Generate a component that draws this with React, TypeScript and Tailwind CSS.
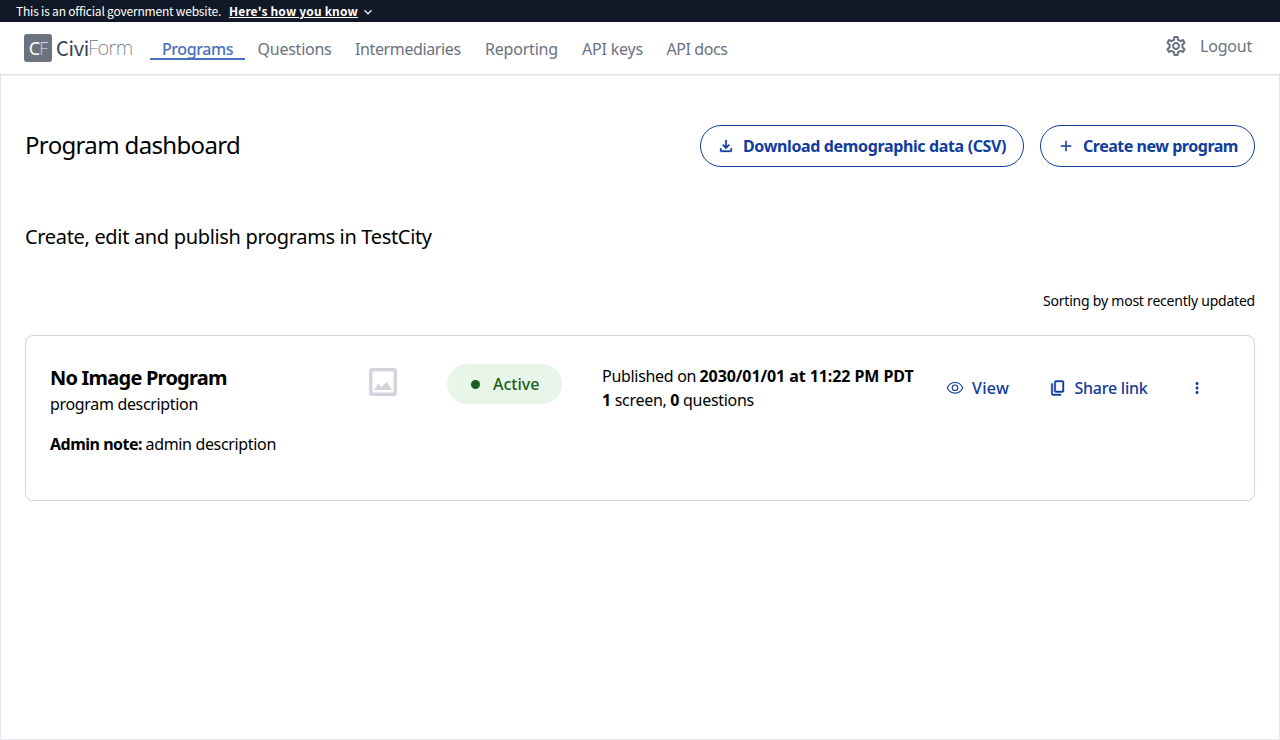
import type { ReactNode } from "react";
import { MdAdd, MdExpandMore, MdMoreVert, MdOutlineSettings } from "react-icons/md";

function DownloadIcon() {
  return (
    <svg viewBox="0 -960 960 960" className="size-[18px] shrink-0" fill="currentColor" stroke="currentColor" strokeWidth="16">
      <path d="M480-320 280-520l56-58 104 104v-326h80v326l104-104 56 58-200 200ZM240-160q-33 0-56.5-23.5T160-240v-120h80v120h480v-120h80v120q0 33-23.5 56.5T720-160H240Z" />
    </svg>
  );
}

function CopyIcon() {
  return (
    <svg viewBox="0 -960 960 960" className="size-[18px] shrink-0" fill="currentColor" stroke="currentColor" strokeWidth="22">
      <path d="M360-240q-33 0-56.5-23.5T280-320v-480q0-33 23.5-56.5T360-880h360q33 0 56.5 23.5T800-800v480q0 33-23.5 56.5T720-240H360Zm0-80h360v-480H360v480ZM200-80q-33 0-56.5-23.5T120-160v-560h80v560h440v80H200Z" />
    </svg>
  );
}

function EyeIcon() {
  return (
    <svg viewBox="0 0 24 24" className="size-[18px] shrink-0" fill="none" stroke="currentColor" strokeWidth="1.5">
      <path d="M1.7 11.7C3.6 7.3 7.5 4.6 12 4.6s8.4 2.7 10.3 7.1c-1.9 4.4-5.8 7.1-10.3 7.1s-8.4-2.7-10.3-7.1Z" />
      <circle cx="12" cy="11.7" r="3.7" />
    </svg>
  );
}

function ImageIcon() {
  return (
    <svg viewBox="0 0 28 28" className="size-7" fill="none">
      <rect x="1.75" y="1.75" width="24.5" height="24.5" rx="1.5" stroke="#d1d5db" strokeWidth="3.4" />
      <path d="M5 22 9.4 15.6 12.6 19.4 17.6 13.8 23.2 22Z" fill="#d1d5db" />
    </svg>
  );
}

const navItems = [
  { label: "Questions", style: "w-[97.5px] tracking-[-0.24px]" },
  { label: "Intermediaries", style: "w-[130px] tracking-[-0.38px]" },
  { label: "Reporting", style: "w-[97px] tracking-[-0.2px]" },
  { label: "API keys", style: "w-[84.5px] tracking-[-0.2px]" },
  { label: "API docs", style: "w-[86px] tracking-[-0.42px]" },
];

function OutlineButton({ className, icon, children }: { className: string; icon: ReactNode; children: ReactNode }) {
  return (
    <button className={`flex h-[42px] items-center gap-2 rounded-full border border-[#103c9c] pl-4 font-bold whitespace-nowrap text-[#103c9c] ${className}`}>
      {icon}
      <span>{children}</span>
    </button>
  );
}

export default function App() {
  return (
    <div className="flex h-[740px] w-[1280px] flex-col overflow-hidden bg-white font-['Noto_Sans',sans-serif] text-base text-black">
      <div className="flex h-[22px] shrink-0 items-center bg-[#111827] pl-4 font-['Noto_Sans_CJK_SC',sans-serif] text-xs whitespace-nowrap text-white">
        <span className="w-[213px] tracking-[-0.2px]">This is an official government website.</span>
        <button className="flex items-center font-bold">
          <span className="w-[129px] text-left tracking-[0.16px] underline">Here's how you know</span>
          <MdExpandMore className="mt-px ml-0.5 size-4 text-[#e5e7eb]" />
        </button>
      </div>

      <header className="relative flex h-[52px] shrink-0 pl-6 whitespace-nowrap text-[#6b7280] shadow-[0_1px_2px_rgba(0,0,0,0.16)]">
        <div className="flex h-[52px] w-[126px] items-center">
          <div className="flex size-7 items-center justify-center rounded-[3px] bg-[#6b7280] text-[18px] leading-none tracking-[-0.9px]">
            <span className="text-white">C</span>
            <span className="font-extralight text-[#e5e7eb]">F</span>
          </div>
          <div className="ml-1 flex text-xl leading-none">
            <span className="w-8 font-['Noto_Sans_CJK_SC',sans-serif] tracking-[-0.3px] text-[#374151]">Civi</span>
            <span className="font-extralight tracking-[-0.5px]">Form</span>
          </div>
        </div>
        <nav className="flex pt-[15px]">
          <a className="mr-[0.5px] h-[23px] w-[95px] border-b-2 border-[#4a6fbd] px-3 leading-6 font-medium tracking-[-0.42px] text-[#4a6fbd]">Programs</a>
          {navItems.map((n) => (
            <a key={n.label} className={`pl-3 leading-6 ${n.style}`}>{n.label}</a>
          ))}
        </nav>
        <div className="ml-auto flex h-12 items-center gap-3 pr-7">
          <MdOutlineSettings className="size-6" />
          <span className="w-[52px] tracking-[-0.2px]">Logout</span>
        </div>
      </header>

      <main className="flex-1 border border-t-0 border-[#e5e7eb] px-6 pt-[51px]">
        <div className="flex h-[42px] items-center gap-4">
          <h1 className="mr-auto pb-0.5 text-2xl tracking-[-0.66px]">Program dashboard</h1>
          <OutlineButton className="w-[324px] tracking-[-0.36px]" icon={<DownloadIcon />}>Download demographic data (CSV)</OutlineButton>
          <OutlineButton className="w-[215px] tracking-[-0.47px]" icon={<MdAdd className="size-[18px]" />}>Create new program</OutlineButton>
        </div>
        <h2 className="mt-14 text-xl tracking-[-0.33px]">Create, edit and publish programs in TestCity</h2>
        <p className="mt-10 text-right text-sm tracking-[-0.22px]">Sorting by most recently updated</p>

        <section className="mt-6 flex h-[166px] rounded-lg border border-[#d1d5db] pt-7 pl-6 whitespace-nowrap">
          <div className="w-[319px]">
            <h3 className="text-xl leading-7 font-bold tracking-[-0.78px]">No Image Program</h3>
            <p className="tracking-[-0.33px]">program description</p>
            <p className="mt-4 flex">
              <span className="w-[95.5px] font-bold tracking-[-0.5px]">Admin note:</span>
              <span className="tracking-[-0.34px]">admin description</span>
            </p>
          </div>
          <div className="w-[78px] pt-1">
            <ImageIcon />
          </div>
          <div className="mr-10 flex h-10 w-[115px] items-center rounded-full bg-[#e8f5e9] pl-[23.5px] font-medium text-[#1b5e20]">
            <span className="mr-[13.5px] size-[9px] rounded-full bg-[#1b5e20]" />
            Active
          </div>
          <div className="w-[344px]">
            <p className="flex">
              <span className="w-[97.5px] tracking-[-0.3px]">Published on</span>
              <span className="font-bold tracking-[-0.08px]">2030/01/01 at 11:22 PM PDT</span>
            </p>
            <p className="tracking-[-0.3px]">
              <b>1</b> screen, <b>0</b> questions
            </p>
          </div>
          <div className="flex h-12 items-center font-medium text-[#103c9c]">
            <button className="flex w-[102.5px] items-center gap-2 tracking-[0.3px]">
              <EyeIcon />
              View
            </button>
            <button className="flex w-[139.5px] items-center gap-2 tracking-[-0.24px]">
              <CopyIcon />
              Share link
            </button>
            <MdMoreVert className="size-[18px]" />
          </div>
        </section>
      </main>
    </div>
  );
}
